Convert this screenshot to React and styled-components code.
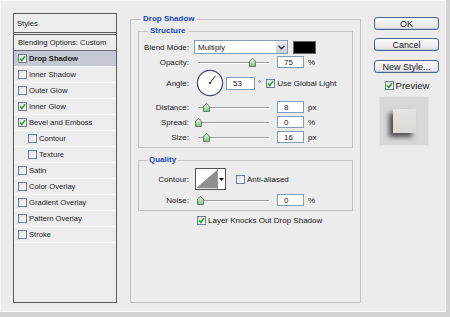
import React from "react";
import styled, { createGlobalStyle } from "styled-components";

const GlobalStyle = createGlobalStyle`
  body {
    margin: 0;
    background: #d2d2d2;
    font-family: "Liberation Sans", Arial, sans-serif;
    font-size: 8px;
    color: #1a1a1a;
  }
`;

const Dialog = styled.div`
  width: 446px;
  height: 312px;
  background: #ececec;
  box-shadow: inset 1px 1px 0 #f8f8f8, inset -1px -1px 0 #fafafa;
  display: flex;
  align-items: flex-start;
  box-sizing: border-box;
`;

/* ---------- left style list ---------- */

const StylesPanel = styled.div`
  margin: 13px 0 0 13px;
  width: 104px;
  height: 290px;
  box-sizing: border-box;
  border: 1px solid #5a5a5a;
  background: #ededed;
  display: flex;
  flex-direction: column;
  font-size: 7.6px;
`;

const PanelHeader = styled.div`
  height: 18px;
  display: flex;
  align-items: center;
  padding-left: 3px;
  border-bottom: 3px double #555;
`;

const ListRow = styled.div`
  height: 16px;
  box-sizing: border-box;
  display: flex;
  align-items: center;
  gap: 2px;
  padding-left: ${p => (p.$indent ? 14 : 4)}px;
  border-bottom: 1px solid ${p => (p.$dark ? "#6a6a6a" : "#f8f8f8")};
  background: ${p => (p.$active ? "#c6c8d4" : "transparent")};
  font-weight: ${p => (p.$active ? "bold" : "normal")};
`;

/* ---------- checkbox ---------- */

const Box = styled.span`
  width: 9px;
  height: 9px;
  flex: none;
  box-sizing: border-box;
  border: 1px solid #6f7f96;
  background: linear-gradient(135deg, #dcdcdc, #ffffff);
  display: flex;
  align-items: center;
  justify-content: center;
`;

const Check = ({ on }) => (
  <Box>
    {on && (
      <svg width="7" height="7" viewBox="0 0 7 7">
        <path d="M1 3.5 L2.8 5.5 L6 1.2" fill="none" stroke="#2aa12a" strokeWidth="1.6" />
      </svg>
    )}
  </Box>
);

/* ---------- main area ---------- */

const Group = styled.fieldset`
  margin: ${p => p.$mt || 0}px 0 0 ${p => p.$ml || 0}px;
  padding: 0 ${p => p.$px || 0}px ${p => p.$pb || 0}px;
  border: 1px solid #c2c2c2;
  min-width: 0;
  width: ${p => p.$w}px;
  height: ${p => (p.$h ? p.$h + "px" : "auto")};
  box-sizing: border-box;
`;

const Legend = styled.legend`
  margin-left: ${p => p.$ml}px;
  padding: 0 2px;
  line-height: 10px;
  font-weight: bold;
  color: #1d48b8;
`;

const Row = styled.div`
  display: flex;
  align-items: center;
  height: ${p => p.$h}px;
  margin-top: ${p => p.$mt}px;
`;

const Label = styled.span`
  width: 50px;
  flex: none;
  text-align: right;
  margin-right: ${p => p.$mr || 5}px;
`;

const Select = styled.div`
  width: 94px;
  height: 14px;
  box-sizing: border-box;
  border: 1px solid #7f9db9;
  background: #fff;
  display: flex;
  align-items: center;
  justify-content: space-between;
  padding-left: 3px;
`;

const SelectButton = styled.span`
  width: 11px;
  height: 12px;
  background: linear-gradient(#eef0f4, #c9cdd6);
  display: flex;
  align-items: center;
  justify-content: center;
`;

const Swatch = styled.span`
  width: 21px;
  height: 11px;
  margin-left: 5px;
  background: #000;
  border: 1px solid #666;
`;

const Track = styled.div`
  position: relative;
  width: 71px;
  height: 12px;
  margin-left: ${p => p.$ml || 4}px;
  margin-right: 8px;
  &::before {
    content: "";
    position: absolute;
    left: 0;
    right: 0;
    top: 6px;
    height: 1px;
    background: #9a9a9a;
    border-bottom: 1px solid #fff;
  }
`;

const Thumb = styled.svg`
  position: absolute;
  top: 2px;
`;

const Slider = ({ at, ml }) => (
  <Track $ml={ml}>
    <Thumb width="7" height="9" viewBox="0 0 7 9" style={{ left: at - 3 }}>
      <defs>
        <linearGradient id="tg" x1="0" y1="0" x2="0" y2="1">
          <stop offset="0" stopColor="#f2f6f0" />
          <stop offset="1" stopColor="#7ec07a" />
        </linearGradient>
      </defs>
      <path d="M0.5 3 L3.5 0.5 L6.5 3 L6.5 8.5 L0.5 8.5 Z" fill="url(#tg)" stroke="#6b7b6b" />
    </Thumb>
  </Track>
);

const Field = styled.span`
  width: ${p => p.$w || 27}px;
  height: ${p => p.$h || 12}px;
  box-sizing: border-box;
  border: 1px solid #7f9db9;
  background: #fff;
  display: flex;
  align-items: center;
  padding-left: 6px;
  flex: none;
`;

const Unit = styled.span`
  margin-left: 4px;
`;

const Dial = styled.svg`
  margin-left: 2px;
  flex: none;
`;

const CheckLabel = styled.label`
  display: flex;
  align-items: center;
  gap: 2px;
  margin-left: ${p => p.$ml || 0}px;
`;

const ContourBox = styled.div`
  width: 31px;
  height: 22px;
  box-sizing: border-box;
  border: 1px solid #555;
  display: flex;
  background: #fff;
`;

const ContourArrow = styled.span`
  width: 7px;
  border-left: 1px solid #999;
  display: flex;
  align-items: center;
  justify-content: center;
`;

/* ---------- right column ---------- */

const Side = styled.div`
  margin: 17px 0 0 13px;
  width: 65px;
  display: flex;
  flex-direction: column;
  align-items: center;
`;

const Button = styled.div`
  width: 65px;
  height: 13px;
  box-sizing: border-box;
  margin-bottom: ${p => p.$mb}px;
  border: 1px solid #4b6186;
  border-radius: 3px;
  background: linear-gradient(#fbfbfb, #e2e2e4);
  box-shadow: inset 0 -1px 0 #c8ccd6;
  display: flex;
  align-items: center;
  justify-content: center;
  font-size: 9px;
`;

const PreviewLabel = styled.label`
  display: flex;
  align-items: center;
  gap: 2px;
  font-size: 9.5px;
  margin-top: -1px;
  margin-left: 1px;
`;

const PreviewBox = styled.div`
  width: 48px;
  height: 48px;
  margin-top: 5px;
  margin-left: -5px;
  background: #d8d8d8;
  border: 1px solid #e4e4e4;
  display: flex;
  align-items: center;
  justify-content: center;
`;

const PreviewSquare = styled.div`
  width: 23px;
  height: 24px;
  background: linear-gradient(#e6e4e0, #dcd9d4);
  box-shadow: -4px 4px 5px rgba(0, 0, 0, 0.65);
`;

const styleItems = [
  { name: "Drop Shadow", on: true, active: true },
  { name: "Inner Shadow" },
  { name: "Outer Glow" },
  { name: "Inner Glow", on: true },
  { name: "Bevel and Emboss", on: true },
  { name: "Contour", indent: true },
  { name: "Texture", indent: true },
  { name: "Satin" },
  { name: "Color Overlay" },
  { name: "Gradient Overlay" },
  { name: "Pattern Overlay" },
  { name: "Stroke" }
];

export default function App() {
  const angle = (53 * Math.PI) / 180;
  return (
    <>
      <GlobalStyle />
      <Dialog>
        <StylesPanel>
          <PanelHeader>Styles</PanelHeader>
          <ListRow $dark>Blending Options: Custom</ListRow>
          {styleItems.map(item => (
            <ListRow key={item.name} $active={item.active} $indent={item.indent}>
              <Check on={item.on} />
              {item.name}
            </ListRow>
          ))}
        </StylesPanel>

        <Group $mt={14} $ml={13} $w={231} $h={289} $px={7}>
          <Legend $ml={3}>Drop Shadow</Legend>
          <Group $mt={2} $w={215} $pb={4}>
            <Legend $ml={9}>Structure</Legend>
            <Row $h={14} $mt={4}>
              <Label>Blend Mode:</Label>
              <Select>
                Multiply
                <SelectButton>
                  <svg width="7" height="5" viewBox="0 0 7 5">
                    <path d="M0.5 0.8 L3.5 3.8 L6.5 0.8" fill="none" stroke="#333" strokeWidth="1.4" />
                  </svg>
                </SelectButton>
              </Select>
              <Swatch />
            </Row>
            <Row $h={12} $mt={2}>
              <Label>Opacity:</Label>
              <Slider at={54} />
              <Field>75</Field>
              <Unit>%</Unit>
            </Row>
            <Row $h={28} $mt={1}>
              <Label>Angle:</Label>
              <Dial width="28" height="28" viewBox="0 0 28 28">
                <circle cx="14" cy="14" r="12.6" fill="#fff" stroke="#4a5068" strokeWidth="1.3" />
                <line
                  x1="14"
                  y1="14"
                  x2={14 + 9 * Math.cos(angle)}
                  y2={14 - 9 * Math.sin(angle)}
                  stroke="#222"
                  strokeWidth="1"
                />
                <circle cx="14" cy="14" r="1.1" fill="#222" />
              </Dial>
              <Field $w={29} $h={13} style={{ marginLeft: 2 }}>53</Field>
              <Unit style={{ marginLeft: 3 }}>°</Unit>
              <CheckLabel $ml={5}>
                <Check on />
                Use Global Light
              </CheckLabel>
            </Row>
            <Row $h={12} $mt={4}>
              <Label>Distance:</Label>
              <Slider at={8} />
              <Field>8</Field>
              <Unit>px</Unit>
            </Row>
            <Row $h={12} $mt={3}>
              <Label>Spread:</Label>
              <Slider at={0} />
              <Field>0</Field>
              <Unit>%</Unit>
            </Row>
            <Row $h={12} $mt={3}>
              <Label>Size:</Label>
              <Slider at={8} />
              <Field>16</Field>
              <Unit>px</Unit>
            </Row>
          </Group>

          <Group $mt={7} $w={215} $pb={4}>
            <Legend $ml={8}>Quality</Legend>
            <Row $h={22} $mt={3}>
              <Label $mr={6}>Contour:</Label>
              <ContourBox>
                <svg width="23" height="20" viewBox="0 0 23 20">
                  <rect width="23" height="20" fill="#fff" />
                  <path d="M0 20 L23 0 L23 20 Z" fill="#8f8f8f" />
                </svg>
                <ContourArrow>
                  <svg width="5" height="3" viewBox="0 0 5 3">
                    <path d="M0 0 L5 0 L2.5 3 Z" fill="#111" />
                  </svg>
                </ContourArrow>
              </ContourBox>
              <CheckLabel $ml={10}>
                <Check />
                Anti-aliased
              </CheckLabel>
            </Row>
            <Row $h={12} $mt={4}>
              <Label>Noise:</Label>
              <Slider at={2} />
              <Field>0</Field>
              <Unit>%</Unit>
            </Row>
          </Group>

          <Row $h={10} $mt={4}>
            <CheckLabel $ml={59}>
              <Check on />
              Layer Knocks Out Drop Shadow
            </CheckLabel>
          </Row>
        </Group>

        <Side>
          <Button $mb={8}>OK</Button>
          <Button $mb={9}>Cancel</Button>
          <Button $mb={8}>New Style...</Button>
          <PreviewLabel>
            <Check on />
            Preview
          </PreviewLabel>
          <PreviewBox>
            <PreviewSquare />
          </PreviewBox>
        </Side>
      </Dialog>
    </>
  );
}
